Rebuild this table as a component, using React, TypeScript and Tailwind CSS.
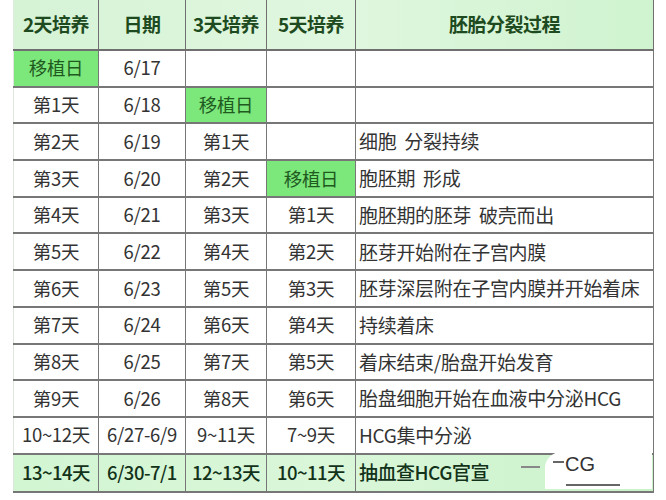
const rows: [string, string, string, string, string][] = [
  ['移植日', '6/17', '', '', ''],
  ['第1天', '6/18', '移植日', '', ''],
  ['第2天', '6/19', '第1天', '', '细胞  分裂持续'],
  ['第3天', '6/20', '第2天', '移植日', '胞胚期  形成'],
  ['第4天', '6/21', '第3天', '第1天', '胞胚期的胚芽  破壳而出'],
  ['第5天', '6/22', '第4天', '第2天', '胚芽开始附在子宫内膜'],
  ['第6天', '6/23', '第5天', '第3天', '胚芽深层附在子宫内膜并开始着床'],
  ['第7天', '6/24', '第6天', '第4天', '持续着床'],
  ['第8天', '6/25', '第7天', '第5天', '着床结束/胎盘开始发育'],
  ['第9天', '6/26', '第8天', '第6天', '胎盘细胞开始在血液中分泌HCG'],
  ['10~12天', '6/27-6/9', '9~11天', '7~9天', 'HCG集中分泌'],
]

const last = ['13~14天', '6/30-7/1', '12~13天', '10~11天', '抽血查HCG官宣']

const widths = ['w-[85px]', 'w-[87px]', 'w-[81px]', 'w-[89px]', 'w-[298px]']

export default function App() {
  return (
    <div
      className="relative w-[666px] h-[500px] bg-white overflow-hidden"
      style={{ fontFamily: '"Noto Sans CJK SC", "Noto Sans", sans-serif' }}
    >
      <table className="ml-[13px] border-collapse table-fixed w-[640px] text-[18.5px] text-[#333]">
        <thead>
          <tr className="h-[50px] bg-gradient-to-r from-[#d6f3d6] via-[#e0f7df] to-[#cff3cf]">
            {['2天培养', '日期', '3天培养', '5天培养', '胚胎分裂过程'].map((h, i) => (
              <th
                key={h}
                className={`${widths[i]} border-x border-b-2 border-[#6f6f6f] text-[19px] font-bold text-[#1e4a20] text-center p-0 whitespace-nowrap tracking-[-0.5px] ${i === 0 ? 'border-l-[#e0ebe0]' : ''}`}
              >
                {h}
              </th>
            ))}
          </tr>
        </thead>
        <tbody>
          {rows.map((r) => (
            <tr key={r[0]} className="h-[36.7px]">
              {r.map((c, i) => {
                const hl = c === '移植日'
                return (
                  <td
                    key={i}
                    className={`border-x border-b-2 border-[#777] p-0 whitespace-pre tracking-[-0.3px] ${i === 0 ? 'border-l-[#dde5dd]' : ''} ${i === 4 ? 'text-left pl-[3px] text-[19px]' : 'text-center'} ${hl ? 'bg-[#7ce77b] text-[#1f5a1f]' : ''}`}
                  >
                    {c}
                  </td>
                )
              })}
            </tr>
          ))}
          <tr className="h-[38px] bg-gradient-to-r from-[#d2f5d2] via-[#daf7d9] to-[#c9f2c9] text-[#12321a] font-medium">
            {last.map((c, i) => (
              <td
                key={i}
                className={`border-x border-b-2 border-[#777] p-0 whitespace-nowrap tracking-[-0.5px] ${i === 0 ? 'border-l-[#dde5dd]' : ''} ${i === 4 ? 'text-left pl-[3px] text-[19px]' : 'text-center'}`}
              >
                {c}
              </td>
            ))}
          </tr>
        </tbody>
      </table>

      {/* stray strokes and white patch covering the end of the last row */}
      <div className="absolute left-[521px] top-[466px] w-[19px] h-[1.5px] bg-[#888]" />
      <div className="absolute left-[545px] top-[452px] w-[107px] h-[37px] bg-white rounded-tl-[16px] flex flex-col pl-[8px] pt-[1px]">
        <div className="flex items-start gap-[1px]">
          <div className="mt-[8px] w-[11px] h-[1.5px] bg-[#666]" />
          <span className="text-[20px] leading-[22px] text-[#333] font-medium" style={{ fontFamily: '"Liberation Sans", sans-serif' }}>
            CG
          </span>
        </div>
        <div className="mt-[9px] ml-[13px] w-[54px] h-[1.5px] bg-[#666]" />
      </div>
    </div>
  )
}
